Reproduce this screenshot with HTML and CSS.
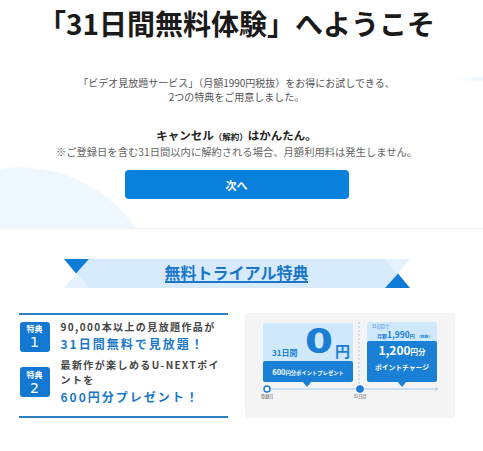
FILE: index.html
```html
<!DOCTYPE html>
<html lang="ja">
<head>
    <meta charset="UTF-8">
    <meta name="viewport" content="width=device-width, initial-scale=1.0">
    <title>31日間無料体験へようこそ</title>
    <link rel="stylesheet" href="styles.css">
</head>
<body>
    <section class="hero">
        <h1>「31日間無料体験」へようこそ</h1>
        <p class="lead">「ビデオ見放題サービス」（月額1990円税抜）をお得にお試しできる、<br>2つの特典をご用意しました。</p>
        <p class="cancel">キャンセル<small>（解約）</small>はかんたん。</p>
        <p class="note">※ご登録日を含む31日間以内に解約される場合、月額利用料は発生しません。</p>
        <button class="next-btn">次へ</button>
    </section>

    <section class="trial">
        <div class="ribbon">
            <svg class="ribbon-bg" width="348" height="29" viewBox="0 0 348 29">
                <polygon points="26,0 322,0 335,14.5 322,29 26,29 13,14.5" fill="#d6eafb"/>
                <polygon points="1,0 26,0 13,14.5" fill="#0f7bd6"/>
                <polygon points="1,29 26,29 13,14.5" fill="#e5f2fd"/>
                <polygon points="322,0 347,0 335,14.5" fill="#e5f2fd"/>
                <polygon points="322,29 347,29 335,14.5" fill="#0f7bd6"/>
            </svg>
            <h2>無料トライアル特典</h2>
        </div>

        <div class="benefits">
            <ul class="benefit-list">
                <li class="benefit">
                    <div class="badge"><span>特典</span><b>1</b></div>
                    <div class="benefit-text">
                        <p class="sub">90,000本以上の見放題作品が</p>
                        <p class="main">31日間無料で見放題！</p>
                    </div>
                </li>
                <li class="benefit">
                    <div class="badge"><span>特典</span><b>2</b></div>
                    <div class="benefit-text">
                        <p class="sub">最新作が楽しめるU-NEXTポイ<br>ントを</p>
                        <p class="main">600円分プレゼント！</p>
                    </div>
                </li>
            </ul>

            <div class="plan-card">
                <svg class="plan" width="210" height="105" viewBox="0 0 210 105">
                    <!-- 31日間 0円 -->
                    <rect x="18" y="10" width="90" height="59" rx="2" fill="#cfe8fb"/>
                    <text x="27" y="43" font-size="8" font-weight="700" fill="#1a7fd4">31日間</text>
                    <text x="60" y="40" font-size="33" font-weight="900" fill="#1a7fd4" textLength="28" lengthAdjust="spacingAndGlyphs">0</text>
                    <text x="90" y="44" font-size="15" font-weight="700" fill="#1a7fd4">円</text>
                    <rect x="18" y="48" width="90" height="21" rx="2" fill="#1a80d6"/>
                    <polygon points="57,68 67,68 62,74" fill="#1a80d6"/>
                    <text x="63" y="61.5" text-anchor="middle" font-weight="700" fill="#fff"><tspan font-size="7.5">600</tspan><tspan font-size="5.3">円分ポイントプレゼント</tspan></text>

                    <line x1="114" y1="9" x2="114" y2="75" stroke="#86bdec" stroke-width="0.8" stroke-dasharray="2 2"/>

                    <!-- 31日目から -->
                    <rect x="122" y="9" width="70" height="60" rx="2" fill="#cfe8fb"/>
                    <text x="127" y="15" font-size="4.2" fill="#1a7fd4">31日目で</text>
                    <text x="132" y="24.5" font-weight="700" fill="#1a7fd4"><tspan font-size="5">月額</tspan><tspan font-size="8.5">1,990</tspan><tspan font-size="5">円</tspan><tspan font-size="3.8" dx="2">（税抜）</tspan></text>
                    <rect x="122" y="28" width="70" height="41" rx="2" fill="#1a80d6"/>
                    <polygon points="152,68 162,68 157,74" fill="#1a80d6"/>
                    <text x="157" y="42" text-anchor="middle" font-weight="700" fill="#fff"><tspan font-size="12">1,200</tspan><tspan font-size="7.5">円分</tspan></text>
                    <text x="157" y="57" text-anchor="middle" font-size="6.8" font-weight="700" fill="#fff">ポイントチャージ</text>

                    <!-- timeline -->
                    <line x1="22" y1="76" x2="193" y2="76" stroke="#9ec8ee" stroke-width="1"/>
                    <polyline points="190,74.3 193,76 190,77.7" fill="none" stroke="#9ec8ee" stroke-width="0.8"/>
                    <circle cx="22" cy="76" r="3" fill="#fff" stroke="#1a7fd4" stroke-width="1.5"/>
                    <circle cx="115" cy="76" r="3.8" fill="#1a7fd4"/>
                    <text x="22" y="85" text-anchor="middle" font-size="4.2" fill="#555">登録日</text>
                    <text x="115" y="85" text-anchor="middle" font-size="4.2" fill="#555">31日目</text>
                </svg>
            </div>
        </div>
    </section>
</body>
</html>
```

FILE: styles.css
```css
body {
    margin: 0;
    font-family: "Noto Sans CJK JP", "Noto Sans", sans-serif;
    color: #222;
    background-color: #fff;
}

.hero {
    height: 228px;
    padding-right: 10px;
    overflow: hidden;
    border-bottom: 1px solid #f0f0f0;
    text-align: center;
    background:
        radial-gradient(ellipse 40px 3px at 495px 79px, #e2effb, rgba(226,239,251,0)),
        radial-gradient(circle at 20px 308px, #eef7fe 140px, rgba(238,247,254,0) 141px);
}

h1 {
    margin: 0;
    padding-top: 4px;
    font-size: 28px;
    line-height: 38px;
    font-weight: 700;
    color: #1a1a1a;
}

.lead {
    margin: 34px 0 0;
    font-size: 10px;
    line-height: 14px;
    color: #555;
}

.cancel {
    margin: 23px 0 0;
    font-size: 11.5px;
    line-height: 16px;
    font-weight: 700;
    color: #222;
}

.cancel small {
    font-size: 8.5px;
}

.note {
    margin: 1px 0 0;
    font-size: 10.3px;
    line-height: 14px;
    color: #666;
}

.next-btn {
    display: block;
    width: 224px;
    height: 29px;
    margin: 11px auto 0;
    border: none;
    border-radius: 4px;
    background-color: #0a80dd;
    color: #fff;
    font-family: inherit;
    font-size: 11px;
    font-weight: 700;
    cursor: pointer;
}

.trial {
    padding: 30px 10px 0 0;
}

.ribbon {
    position: relative;
    width: 348px;
    height: 29px;
    margin: 0 auto;
    display: flex;
    justify-content: center;
}

.ribbon-bg {
    position: absolute;
    top: 0;
    left: 0;
}

.ribbon h2 {
    position: relative;
    margin: 4px 0 0;
    align-self: flex-start;
    font-size: 16px;
    line-height: 18px;
    font-weight: 700;
    color: #1a76c9;
    border-bottom: 2px solid #1a76c9;
}

.benefits {
    display: flex;
    justify-content: center;
    gap: 17px;
    margin-top: 25px;
}

.benefit-list {
    width: 209px;
    margin: 0;
    padding: 4px 0 0;
    list-style: none;
    border-top: 2px solid #2b7fc3;
    border-bottom: 2px solid #2b7fc3;
}

.benefit {
    display: flex;
    align-items: center;
    margin-bottom: 3px;
}

.benefit:last-child {
    margin-bottom: 0;
}

.badge {
    flex: none;
    width: 30px;
    height: 30px;
    margin-left: 1px;
    border-radius: 3px;
    background-color: #1478d2;
    color: #fff;
    display: flex;
    flex-direction: column;
    align-items: center;
    justify-content: center;
}

.badge span {
    font-size: 8px;
    line-height: normal;
    font-weight: 700;
}

.badge b {
    font-family: "DejaVu Sans", sans-serif;
    font-size: 14px;
    line-height: normal;
    font-weight: 400;
}

.benefit-text {
    margin-left: 11px;
}

.benefit-text p {
    margin: 0;
}

.sub {
    font-size: 10px;
    line-height: 15px;
    font-weight: 700;
    letter-spacing: 1.4px;
    color: #444;
}

.main {
    font-size: 12px;
    line-height: 20px;
    font-weight: 700;
    letter-spacing: 2px;
    color: #1a78c8;
}

.plan-card {
    width: 210px;
    height: 105px;
    border-radius: 4px;
    background-color: #f4f4f4;
}

.plan {
    display: block;
    font-family: "Noto Sans CJK JP", sans-serif;
}
```
